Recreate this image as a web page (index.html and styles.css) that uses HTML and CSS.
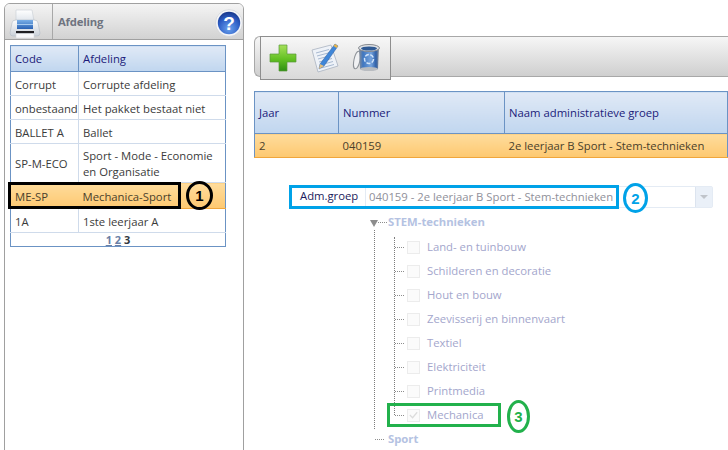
FILE: index.html
```html
<!DOCTYPE html>
<html lang="nl">
<head>
<meta charset="utf-8">
<title>Afdeling</title>
<link rel="stylesheet" href="styles.css">
</head>
<body>
<div class="page">
  <aside class="panel">
    <div class="panel-head">
      <div class="print-cell">
        <svg width="32" height="30" viewBox="0 0 32 30">
          <defs>
            <linearGradient id="pb" x1="0" y1="0" x2="0" y2="1"><stop offset="0" stop-color="#fdfdfd"/><stop offset="1" stop-color="#c9d0d8"/></linearGradient>
            <linearGradient id="ps" x1="0" y1="0" x2="0" y2="1"><stop offset="0" stop-color="#7ab0e8"/><stop offset="1" stop-color="#2a62b4"/></linearGradient>
            <linearGradient id="pp" x1="0" y1="0" x2="0" y2="1"><stop offset="0" stop-color="#ffffff"/><stop offset="1" stop-color="#dfe5ec"/></linearGradient>
          </defs>
          <path d="M7 1h16l2 11H7z" fill="url(#pp)" stroke="#c6ccd4" stroke-width=".6"/>
          <path d="M3 14q0-3 4-3h18q4 0 4 3l2 10q0 3-3 3H4q-3 0-3-3z" fill="url(#pb)" stroke="#b4bcc6" stroke-width=".6"/>
          <rect x="8" y="11" width="16" height="9" fill="url(#ps)"/>
          <rect x="8" y="15" width="16" height="1" fill="#a8ccf0"/>
          <rect x="7" y="22" width="18" height="2.500" fill="#1e1e22"/>
          <path d="M7 24.500h18v4.500H7z" fill="#f7f8fa" stroke="#d0d5da" stroke-width=".5"/>
        </svg>
      </div>
      <span class="panel-title">Afdeling</span>
      <svg class="help" width="28" height="28" viewBox="0 0 28 28">
        <defs>
          <radialGradient id="hg" cx=".5" cy=".75" r=".8"><stop offset="0" stop-color="#6aa2ee"/><stop offset=".6" stop-color="#2c5cc4"/><stop offset="1" stop-color="#14307e"/></radialGradient>
        </defs>
        <circle cx="14" cy="14" r="13.400" fill="#f4f5f8" stroke="#c2c6cc" stroke-width=".5"/>
        <circle cx="14" cy="14" r="11.200" fill="url(#hg)"/>
        <text x="14" y="20.500" class="help-q">?</text>
      </svg>
    </div>
    <div class="panel-body">
      <div class="list-wrap">
        <table class="grid list">
          <thead><tr class="head"><th class="c-code">Code</th><th>Afdeling</th></tr></thead>
          <tbody>
            <tr class="r24"><td>Corrupt</td><td>Corrupte afdeling</td></tr>
            <tr class="r24"><td class="tight">onbestaand</td><td>Het pakket bestaat niet</td></tr>
            <tr class="r24"><td>BALLET A</td><td>Ballet</td></tr>
            <tr class="r39"><td>SP-M-ECO</td><td class="wrap">Sport - Mode - Economie en Organisatie</td></tr>
            <tr class="sel r26"><td>ME-SP</td><td>Mechanica-Sport</td></tr>
            <tr class="r24"><td>1A</td><td>1ste leerjaar A</td></tr>
          </tbody>
          <tfoot><tr class="pager"><td colspan="2"><a>1</a> <a>2</a> <b>3</b></td></tr></tfoot>
        </table>
        <div class="mark mark-black"></div>
        <div class="badge badge-1">1</div>
      </div>
    </div>
  </aside>

  <main class="content">
    <div class="toolbar">
      <div class="tools">
        <svg width="30" height="30" viewBox="0 0 30 30">
          <defs><linearGradient id="gp" x1="0" y1="0" x2="0" y2="1"><stop offset="0" stop-color="#a6e05a"/><stop offset=".55" stop-color="#62c022"/><stop offset="1" stop-color="#2f8f14"/></linearGradient></defs>
          <path d="M11 2h8v9h9v8h-9v9h-8v-9H2v-8h9z" fill="url(#gp)" stroke="#5a9a3a" stroke-width=".7"/>
        </svg>
        <svg width="30" height="30" viewBox="0 0 30 30">
          <path d="M2 7L21 2l7 21-20 6z" fill="#eef2f8" stroke="#a9b2c0" stroke-width=".8"/>
          <path d="M6 10l13-3.500M7 13l13-3.500M8 16l13-3.500M9 19l13-3.500M10 22l13-3.500M11 25l13-3.500" stroke="#9fb2cc" stroke-width=".9" fill="none"/>
          <path d="M25 1l3 2-14 20-5 3 1-5z" fill="#3f86d8" stroke="#2c5a9c" stroke-width=".5"/>
          <path d="M25 1l3 2-1.500 2-3-2z" fill="#e8b44a"/>
          <path d="M10 21l4 2-5 3z" fill="#e8c07c"/>
        </svg>
        <svg width="30" height="30" viewBox="0 0 30 30">
          <defs><linearGradient id="bk" x1="0" y1="0" x2="1" y2="0"><stop offset="0" stop-color="#8a8f96"/><stop offset=".2" stop-color="#3f76c0"/><stop offset=".6" stop-color="#76a4de"/><stop offset=".85" stop-color="#2d5fa8"/><stop offset="1" stop-color="#8b9098"/></linearGradient></defs>
          <ellipse cx="5" cy="17" rx="3" ry="9" fill="#f0f1f3" stroke="#8d9298" transform="rotate(12 5 17)"/>
          <path d="M7 5h20l-1 21q-9 3-18 0z" fill="url(#bk)"/>
          <ellipse cx="17" cy="26" rx="9" ry="2" fill="#b9bcc0"/>
          <ellipse cx="17" cy="5" rx="10.500" ry="3.500" fill="#dfe1e4" stroke="#85898f"/>
          <ellipse cx="17" cy="5.500" rx="8" ry="2" fill="#2f5a94"/>
          <circle cx="17" cy="16" r="4.500" fill="none" stroke="#d3e5fa" stroke-width="1.500" stroke-dasharray="4 1.500"/>
        </svg>
      </div>
    </div>

    <table class="grid groups">
      <thead><tr class="head"><th class="c-jaar">Jaar</th><th class="c-num">Nummer</th><th>Naam administratieve groep</th></tr></thead>
      <tbody><tr class="sel r24"><td>2</td><td>040159</td><td>2e leerjaar B Sport - Stem-technieken</td></tr></tbody>
    </table>

    <div class="form-row">
      <label class="field-label">Adm.groep</label>
      <div class="combo">
        <span class="combo-value">040159 - 2e leerjaar B Sport - Stem-technieken</span>
        <span class="combo-btn"><i></i></span>
      </div>
      <div class="mark mark-blue"></div>
      <div class="badge badge-2">2</div>
    </div>

    <div class="tree">
      <div class="node-root"><i class="tri"></i><span class="dash"></span><span class="root-label">STEM-technieken</span></div>
      <ul class="leaves">
        <li><span class="dash"></span><span class="box"></span>Land- en tuinbouw</li>
        <li><span class="dash"></span><span class="box"></span>Schilderen en decoratie</li>
        <li><span class="dash"></span><span class="box"></span>Hout en bouw</li>
        <li><span class="dash"></span><span class="box"></span>Zeevisserij en binnenvaart</li>
        <li><span class="dash"></span><span class="box"></span>Textiel</li>
        <li><span class="dash"></span><span class="box"></span>Elektriciteit</li>
        <li><span class="dash"></span><span class="box"></span>Printmedia</li>
        <li class="last"><span class="dash"></span><span class="box checked"><svg width="12" height="12" viewBox="0 0 12 12"><path d="M2 6l3 3 5-6" fill="none" stroke="#dcdcdc" stroke-width="1.300"/></svg></span>Mechanica
          <div class="mark mark-green"></div>
          <div class="badge badge-3">3</div>
        </li>
      </ul>
      <div class="node-sport"><span class="dash"></span><span class="root-label">Sport</span></div>
    </div>
  </main>
</div>
</body>
</html>
```

FILE: styles.css
```css
* { box-sizing: border-box; }
html, body { margin: 0; padding: 0; height: 100%; overflow: hidden; background: #fff; }
body { font: 11.3px/16px "Open Sans", "Noto Sans", sans-serif; color: #3b3b3b; }
.page { display: flex; align-items: flex-start; width: 728px; height: 450px; padding: 3px 0 0 4px; }

/* left panel */
.panel { width: 240px; height: 460px; flex: none; border: 1px solid #a0a0a0; border-radius: 6px 6px 0 0; }
.panel-head { position: relative; display: flex; align-items: center; height: 36px; border-bottom: 1px solid #a0a0a0; border-radius: 5px 5px 0 0; background: linear-gradient(#f4f4f4, #d2d2d2); }
.print-cell { display: flex; align-items: center; width: 48px; height: 100%; border-right: 1px solid #a8a8a8; padding: 5px 0 0 4px; }
.panel-title { margin-left: 5px; font-weight: 700; color: #6f7480; letter-spacing: -.2px; }
.help { position: absolute; right: 0; top: 5px; }
.help-q { font: 700 19px "Liberation Sans", sans-serif; fill: #fff; text-anchor: middle; }
.panel-body { padding: 5px 0 0 5px; }
.list-wrap { position: relative; width: 216px; }

/* grids */
.grid { border-collapse: collapse; table-layout: fixed; width: 100%; border: 1px solid #6b93c4; }
.grid th { font-weight: 400; color: #1b1b7a; text-align: left; padding: 1px 4px 0; border-right: 1px solid #6b93c4; border-bottom: 1px solid #6b93c4; background: linear-gradient(#e0e9f6, #c0d6ef); }
.grid th:last-child { border-right: 0; }
.grid td { padding: 1px 4px 0; vertical-align: middle; border-right: 1px solid #cfdbeb; border-bottom: 1px solid #cfdbeb; }
.grid td:last-child { border-right: 0; }
.list td { padding-top: 2px; }
.list .head { height: 26px; }
.c-code { width: 68px; }
.r24 { height: 24px; }
.r26 { height: 26px; }
.r39 { height: 39px; }
.tight { padding-right: 0 !important; white-space: nowrap; }
.wrap { line-height: 16px; }
.grid .sel td { background: linear-gradient(#ffdc9c, #fdc870); border-right: 0; border-bottom: 1px solid #f0a63c; color: #4a3f2c; }
.pager td { height: 14px; line-height: 12px; padding: 0; text-align: center; font-size: 11px; color: #3a4a70; border: 0; }
.pager a { color: #6a7fa6; text-decoration: underline; font-weight: 700; }
.pager b { color: #33383f; }

/* annotations */
.mark { position: absolute; pointer-events: none; }
.mark-black { left: -2px; top: 137px; width: 173px; height: 27px; border: 3px solid #000; }
.mark-blue { left: 35px; top: 0; width: 330px; height: 24px; border: 3px solid #00a2e8; }
.mark-green { left: -7px; top: 0; width: 114px; height: 24px; border: 3px solid #22b14c; }
.badge { position: absolute; display: flex; align-items: center; justify-content: center; font: 700 15px "Liberation Sans", sans-serif; background: #fff; border-radius: 50%; }
.badge-1 { left: 176px; top: 136px; width: 27px; height: 29px; border: 3px solid #000; color: #000; background: transparent; }
.badge-2 { left: 369px; top: -2px; width: 25px; height: 30px; border: 3px solid #00a2e8; color: #00a2e8; }
.badge-3 { left: 113px; top: -3px; width: 23px; height: 33px; border: 3px solid #22b14c; color: #22b14c; }

/* right */
.content { flex: 1; min-width: 0; padding: 32px 0 0 6px; margin-left: 4px; margin-top: 0; }
.toolbar { height: 41px; margin-top: 1px; border: 1px solid #a8a8a8; border-right: 0; border-radius: 6px 0 0 6px; background: linear-gradient(#f6f6f6, #cfcfcf); }
.tools { display: flex; align-items: center; gap: 12px; width: 131px; height: 44px; margin: -1px 0 0 5px; padding-left: 7px; border: 1px solid #8e8e8e; background: linear-gradient(#f7f7f7, #d9d9d9); }
.groups { margin-top: 14px; }
.groups .head { height: 42px; }
.c-jaar { width: 84px; }
.c-num { width: 166px; }

.form-row { position: relative; display: flex; align-items: center; height: 25px; margin: 27px 0 0 0; padding-left: 38px; }
.field-label { width: 73px; padding: 0 0 4px 8px; color: #1b1b5c; flex: none; }
.combo { display: flex; align-items: center; justify-content: space-between; width: 348px; height: 22px; margin-top: -2px; border: 1px solid #e4ebf4; border-radius: 2px; padding-left: 3px; color: #90909a; }
.combo-btn { display: flex; align-items: center; justify-content: center; width: 17px; height: 100%; border-left: 1px solid #dce4ef; background: #eaf0f8; }
.combo-btn i { width: 0; height: 0; border: 4px solid transparent; border-top: 4px solid #c0c4ca; border-bottom: 0; }

/* tree */
.tree { position: relative; margin: 4px 0 0 116px; color: #a3a6cc; }
.node-root { display: flex; align-items: center; height: 16px; }
.tri { width: 0; height: 0; border: 4px solid transparent; border-top: 7px solid #8d8d8d; border-bottom: 0; margin-top: 2px; }
.dash { display: inline-block; flex: none; width: 9px; border-top: 1px dotted #8d8d8d; }
.root-label { margin-left: 4px; font-weight: 700; color: #b4c2e2; }
.node-root .root-label { margin-left: 1px; }
.leaves { position: relative; list-style: none; margin: 0 0 0 24px; padding: 0; }
.tree::before { content: ""; position: absolute; left: 4px; top: 16px; height: 199px; border-left: 1px dotted #7c7c7c; }
.leaves::before { content: ""; position: absolute; left: 0; top: 2px; height: 178px; border-left: 1px dotted #7c7c7c; }
.leaves li { position: relative; display: flex; align-items: center; height: 24px; }
.leaves li:first-child { margin-top: 5px; }
.box { display: inline-flex; flex: none; align-items: center; justify-content: center; width: 13px; height: 13px; margin: 0 7px 0 3px; border: 1px solid #ececec; background: #fbfbfb; }
.leaves .dash { width: 9px; margin-left: 1px; }
.node-sport { position: relative; display: flex; align-items: center; height: 16px; margin: 4px 0 0 5px; }
```
